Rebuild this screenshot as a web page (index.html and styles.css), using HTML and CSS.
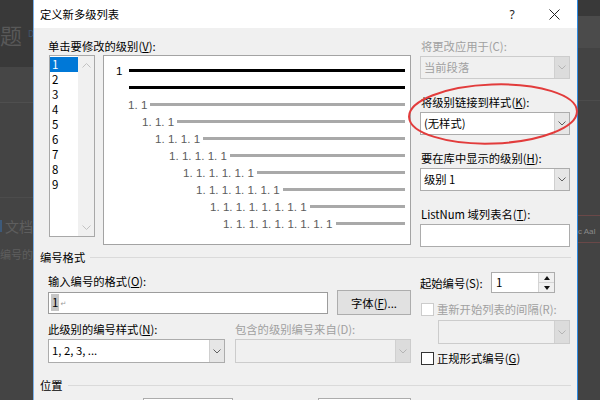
FILE: index.html
```html
<!DOCTYPE html>
<html>
<head>
<meta charset="utf-8">
<link rel="stylesheet" href="styles.css">
</head>
<body>
<div class="screen">
  <div class="bg-left">
    <div class="bgl-top"><span class="big">题</span><span class="tiny">D</span></div>
    <div class="bgl-band"></div>
    <div class="bgl-mid"></div>
    <div class="bgl-low">
      <div class="bgl-t1"><span class="bgl-icon"></span>文档</div>
      <div class="bgl-t2">编号的</div>
    </div>
  </div>

  <div class="dialog">
    <div class="titlebar">
      <span class="title">定义新多级列表</span>
      <span class="tb-spacer"></span>
      <span class="tb-btn help">?</span>
      <span class="tb-btn"><svg width="11" height="11" viewBox="0 0 11 11"><path d="M0.5 0.5 L10.5 10.5 M10.5 0.5 L0.5 10.5" stroke="#222" stroke-width="1" fill="none"/></svg></span>
    </div>

    <div class="body">
      <div class="top">
        <div class="col-left">
          <div class="label">单击要修改的级别(<u>V</u>):</div>
          <div class="lrow">
            <div class="listbox">
              <div class="items">
                <div class="item sel">1</div>
                <div class="item">2</div>
                <div class="item">3</div>
                <div class="item">4</div>
                <div class="item">5</div>
                <div class="item">6</div>
                <div class="item">7</div>
                <div class="item">8</div>
                <div class="item">9</div>
              </div>
              <div class="vscroll">
                <svg width="9" height="5" viewBox="0 0 9 5"><path d="M0.5 4.5 L4.5 0.5 L8.5 4.5" fill="none" stroke="#c2c2c2"/></svg>
                <svg width="9" height="5" viewBox="0 0 9 5"><path d="M0.5 0.5 L4.5 4.5 L8.5 0.5" fill="none" stroke="#c2c2c2"/></svg>
              </div>
            </div>
            <div class="preview">
              <div class="pr r1"><span class="pn n1">1</span><i class="pl blk"></i></div>
              <div class="pr r2"><i class="pl blk"></i></div>
              <div class="pr l2"><span class="pn">1. 1</span><i class="pl"></i></div>
              <div class="pr l3"><span class="pn">1. 1. 1</span><i class="pl"></i></div>
              <div class="pr l4"><span class="pn">1. 1. 1. 1</span><i class="pl"></i></div>
              <div class="pr l5"><span class="pn">1. 1. 1. 1. 1</span><i class="pl"></i></div>
              <div class="pr l6"><span class="pn">1. 1. 1. 1. 1. 1</span><i class="pl"></i></div>
              <div class="pr l7"><span class="pn">1. 1. 1. 1. 1. 1. 1</span><i class="pl"></i></div>
              <div class="pr l8"><span class="pn">1. 1. 1. 1. 1. 1. 1. 1</span><i class="pl"></i></div>
              <div class="pr l9"><span class="pn">1. 1. 1. 1. 1. 1. 1. 1. 1</span><i class="pl"></i></div>
            </div>
          </div>
        </div>

        <div class="col-right">
          <div class="group">
            <div class="label dis-text">将更改应用于(C):</div>
            <div class="combo dis">
              <span class="combo-text">当前段落</span>
              <span class="combo-btn"><svg width="8" height="5" viewBox="0 0 8 5"><path d="M0.5 0.5 L4 4 L7.5 0.5" fill="none" stroke="#b4b4b4"/></svg></span>
            </div>
          </div>
          <div class="group">
            <div class="label">将级别链接到样式(<u>K</u>):</div>
            <div class="combo">
              <span class="combo-text">(无样式)</span>
              <span class="combo-btn"><svg width="8" height="5" viewBox="0 0 8 5"><path d="M0.5 0.5 L4 4 L7.5 0.5" fill="none" stroke="#606060"/></svg></span>
            </div>
          </div>
          <div class="group">
            <div class="label">要在库中显示的级别(<u>H</u>):</div>
            <div class="combo">
              <span class="combo-text">级别 1</span>
              <span class="combo-btn"><svg width="8" height="5" viewBox="0 0 8 5"><path d="M0.5 0.5 L4 4 L7.5 0.5" fill="none" stroke="#606060"/></svg></span>
            </div>
          </div>
          <div class="group">
            <div class="label">ListNum 域列表名(<u>T</u>):</div>
            <div class="textbox"></div>
          </div>
        </div>
      </div>

      <div class="section s1"><span>编号格式</span><i class="sep"></i></div>

      <div class="lower">
        <div class="col-left">
          <div class="label l-fmt">输入编号的格式(<u>O</u>):</div>
          <div class="fmt-row">
            <div class="fmt-box"><span class="hl">1</span><span class="ret">↵</span></div>
            <div class="button">字体(<u>F</u>)...</div>
          </div>
          <div class="label-row">
            <div class="label lr-a">此级别的编号样式(<u>N</u>):</div>
            <div class="label lr-b dis-text">包含的级别编号来自(D):</div>
          </div>
          <div class="combo-row">
            <div class="combo c-style">
              <span class="combo-text">1, 2, 3, ...</span>
              <span class="combo-btn"><svg width="8" height="5" viewBox="0 0 8 5"><path d="M0.5 0.5 L4 4 L7.5 0.5" fill="none" stroke="#606060"/></svg></span>
            </div>
            <div class="combo dis c-inc">
              <span class="combo-text"></span>
              <span class="combo-btn"><svg width="8" height="5" viewBox="0 0 8 5"><path d="M0.5 0.5 L4 4 L7.5 0.5" fill="none" stroke="#b4b4b4"/></svg></span>
            </div>
          </div>
        </div>

        <div class="col-right">
          <div class="spin-row">
            <span class="spin-label">起始编号(S):</span>
            <div class="spin">
              <span class="spin-val">1</span>
              <span class="spin-btns">
                <span class="sb up"><i class="tri-up"></i></span>
                <span class="sb"><i class="tri-down"></i></span>
              </span>
            </div>
          </div>
          <div class="check-row cr1">
            <span class="checkbox dis"></span>
            <span class="dis-text">重新开始列表的间隔(R):</span>
          </div>
          <div class="combo dis c-restart">
            <span class="combo-text"></span>
            <span class="combo-btn"><svg width="8" height="5" viewBox="0 0 8 5"><path d="M0.5 0.5 L4 4 L7.5 0.5" fill="none" stroke="#b4b4b4"/></svg></span>
          </div>
          <div class="check-row cr2">
            <span class="checkbox"></span>
            <span>正规形式编号(<u>G</u>)</span>
          </div>
        </div>
      </div>

      <div class="section s2"><span>位置</span><i class="sep"></i></div>

      <div class="bottom">
        <div class="pbox b1"></div>
        <div class="pbox b2"></div>
      </div>
    </div>

    <svg class="ellipse" width="176" height="66" viewBox="0 0 176 66">
      <ellipse cx="88" cy="33" rx="84" ry="29.5" fill="none" stroke="#e23c3c" stroke-width="2" transform="rotate(-2 88 33)"/>
    </svg>
  </div>

  <div class="bg-right">
    <div class="bgr-1"></div>
    <div class="bgr-2"></div>
    <div class="bgr-3">
      <div class="bgr-line a"></div>
      <div class="bgr-red"></div>
      <div class="bgr-text">c AaI</div>
      <div class="bgr-red b"></div>
    </div>
  </div>
</div>
</body>
</html>
```

FILE: styles.css
```css
* { box-sizing: border-box; }

html, body {
  margin: 0;
  padding: 0;
}

body {
  width: 600px;
  height: 400px;
  overflow: hidden;
  font-family: "Noto Sans CJK SC", "Noto Sans", sans-serif;
  font-size: 11.3px;
  color: #000;
  background: #444;
}

u { text-decoration: underline; text-underline-offset: 1px; }

.screen {
  display: flex;
  width: 600px;
  height: 400px;
}

/* ---------- background left ---------- */
.bg-left {
  width: 33px;
  flex: none;
  background: #444444;
  display: flex;
  flex-direction: column;
  overflow: hidden;
}
.bgl-top {
  height: 67px;
  background: #393939;
  display: flex;
  align-items: center;
  white-space: nowrap;
}
.bgl-top .big {
  font-size: 22px;
  color: #585858;
  line-height: 1;
}
.bgl-top .tiny {
  font-size: 9px;
  color: #3f5570;
  margin-left: 6px;
}
.bgl-band {
  height: 36px;
  background: #464646;
  border-bottom: 1px solid #4f4f4f;
}
.bgl-mid {
  height: 95px;
  border-bottom: 1px solid #4c4c4c;
}
.bgl-low {
  padding-top: 14px;
  white-space: nowrap;
  font-size: 14px;
  color: #5e5e5e;
  line-height: 28px;
}
.bgl-t1 { display: flex; align-items: center; }
.bgl-icon {
  width: 3px;
  height: 12px;
  background: #3d5a7a;
  margin-right: 3px;
}
.bgl-t2 { font-size: 11px; }

/* ---------- dialog ---------- */
.dialog {
  position: relative;
  width: 545px;
  flex: none;
  height: 400px;
  background: #f0f0f0;
  border-left: 1px solid #79b0ea;
  border-right: 1px solid #2f8ae0;
  display: flex;
  flex-direction: column;
}

.titlebar {
  height: 28px;
  flex: none;
  background: #ffffff;
  display: flex;
  align-items: center;
  padding-right: 2px;
}
.title {
  padding-left: 6px;
  font-size: 11.3px;
  color: #000;
}
.tb-spacer { flex: 1; }
.tb-btn {
  width: 42px;
  height: 28px;
  display: flex;
  align-items: center;
  justify-content: center;
}
.tb-btn.help {
  font-family: "Noto Sans", sans-serif;
  font-size: 12px;
  color: #222;
}

.body {
  padding: 9px 6px 0 6px;
  display: flex;
  flex-direction: column;
}

.label {
  line-height: 18px;
  height: 18px;
  white-space: nowrap;
}
.dis-text { color: #a0a0a0; }

/* top section */
.top {
  display: flex;
  gap: 9px;
  padding-left: 8px;
  height: 210px;
}
.col-left { width: 363px; flex: none; }
.col-right { width: 150px; flex: none; }

.top .col-right {
  display: flex;
  flex-direction: column;
  gap: 14px;
}
.top .col-right .label { padding-left: 1px; }
.group .combo, .group .textbox { margin-top: 1px; }

.lrow {
  display: flex;
  gap: 8px;
  align-items: flex-start;
}

.listbox {
  width: 46px;
  height: 182px;
  border: 1px solid #a8a8a8;
  background: #fff;
  display: flex;
  margin-left: 1px;
}
.items {
  width: 28px;
  padding-top: 1px;
}
.item {
  height: 15px;
  line-height: 15px;
  padding-left: 2px;
  font-size: 11.5px;
  color: #000;
}
.item.sel {
  background: #0078d7;
  color: #fff;
}
.vscroll {
  width: 16px;
  background: #f0f0f0;
  display: flex;
  flex-direction: column;
  justify-content: space-between;
  align-items: center;
  padding: 7px 0 6px;
}
.vscroll svg { display: block; }

.preview {
  width: 308px;
  height: 190px;
  border: 1px solid #a3a3a3;
  background: #fff;
  padding-top: 6px;
  padding-right: 5px;
}
.pr {
  height: 17px;
  display: flex;
  align-items: center;
}
.pn {
  font-family: "Liberation Sans", Arial, sans-serif;
  font-size: 11.6px;
  line-height: 17px;
  color: #5c5c5c;
  white-space: pre;
  margin-right: 3px;
}
.pn.n1 {
  width: 13px;
  margin-right: 0;
  color: #000;
}
.pl {
  flex: 1;
  height: 3px;
  background: #a9a9a9;
}
.pl.blk { background: #000; }

.r1 { padding-left: 12px; }
.r2 { padding-left: 25px; }
.l2 { padding-left: 24px; }
.l3 { padding-left: 38px; }
.l4 { padding-left: 51px; }
.l5 { padding-left: 65px; }
.l6 { padding-left: 79px; }
.l7 { padding-left: 92px; }
.l8 { padding-left: 106px; }
.l9 { padding-left: 119px; }

/* combos */
.combo {
  height: 23px;
  border: 1px solid #acacac;
  background: #fff;
  display: flex;
}
.combo-text {
  flex: 1;
  padding-left: 3px;
  line-height: 21px;
  white-space: nowrap;
  overflow: hidden;
}
.combo-btn {
  width: 15px;
  background: #e6e6e6;
  border-left: 1px solid #cfcfcf;
  display: flex;
  align-items: center;
  justify-content: center;
}
.combo.dis {
  border-color: #cccccc;
  background: #f0f0f0;
  color: #a0a0a0;
}
.combo.dis .combo-btn {
  background: #dcdcdc;
  border-left-color: #d0d0d0;
}
.combo-btn svg { display: block; }

.textbox {
  height: 23px;
  border: 1px solid #acacac;
  background: #fff;
}

/* sections */
.section {
  display: flex;
  align-items: center;
  line-height: 16px;
  height: 16px;
  white-space: nowrap;
}
.section .sep {
  flex: 1;
  height: 1px;
  background: #dadada;
  margin-left: 5px;
}
.s1 { margin-top: 2px; }
.s2 { margin-top: 10px; }

/* lower section */
.lower {
  display: flex;
  gap: 9px;
  padding-left: 8px;
  height: 102px;
}
.l-fmt {
  margin-top: 8px;
  height: 17px;
  line-height: 17px;
}
.fmt-row {
  display: flex;
  align-items: center;
  gap: 9px;
  height: 25px;
}
.fmt-box {
  width: 280px;
  height: 22px;
  border: 1px solid #9c9c9c;
  background: #fff;
  display: flex;
  align-items: center;
  padding-left: 2px;
}
.fmt-box .hl {
  background: #c6c6c6;
  font-size: 11.5px;
  line-height: 17px;
  padding: 0 1px;
}
.fmt-box .ret {
  font-family: "DejaVu Sans", sans-serif;
  font-size: 7px;
  color: #999;
  margin-left: 1px;
  margin-top: 3px;
}
.button {
  width: 74px;
  height: 25px;
  background: #e1e1e1;
  border: 1px solid #adadad;
  display: flex;
  align-items: center;
  justify-content: center;
  white-space: nowrap;
}
.label-row {
  display: flex;
  margin-top: 5px;
}
.lr-a { width: 187px; }
.combo-row {
  display: flex;
  gap: 10px;
  margin-top: 1px;
}
.c-style { width: 177px; height: 24px; }
.c-inc { width: 176px; height: 24px; }

.lower .col-right {
  display: flex;
  flex-direction: column;
}
.spin-row {
  margin-top: 7px;
  height: 21px;
  display: flex;
  align-items: center;
}
.spin-label {
  width: 71px;
  white-space: nowrap;
}
.spin {
  width: 64px;
  height: 21px;
  border: 1px solid #acacac;
  background: #fff;
  display: flex;
}
.spin-val {
  flex: 1;
  padding-left: 4px;
  line-height: 19px;
  font-size: 11.5px;
}
.spin-btns {
  width: 16px;
  display: flex;
  flex-direction: column;
  border-left: 1px solid #d4d4d4;
}
.sb {
  flex: 1;
  background: #f0f0f0;
  display: flex;
  align-items: center;
  justify-content: center;
}
.sb.up { border-bottom: 1px solid #d4d4d4; }
.tri-up {
  width: 0; height: 0;
  border-left: 3.5px solid transparent;
  border-right: 3.5px solid transparent;
  border-bottom: 4px solid #111;
}
.tri-down {
  width: 0; height: 0;
  border-left: 3.5px solid transparent;
  border-right: 3.5px solid transparent;
  border-top: 4px solid #111;
}

.check-row {
  height: 18px;
  display: flex;
  align-items: center;
  gap: 3px;
  padding-left: 1px;
  white-space: nowrap;
}
.cr1 { margin-top: 7px; }
.cr2 { margin-top: 5px; }
.checkbox {
  width: 13px;
  height: 13px;
  border: 1px solid #333;
  background: #fff;
  flex: none;
}
.checkbox.dis { border-color: #cccccc; }

.c-restart {
  width: 132px;
  height: 24px;
  margin-top: 2px;
  margin-left: 18px;
}

/* bottom partial */
.bottom {
  display: flex;
  margin-top: 5px;
}
.pbox {
  height: 20px;
  border: 1px solid #acacac;
  background: #fff;
}
.b1 { margin-left: 103px; width: 90px; }
.b2 { margin-left: 85px; width: 93px; }

/* annotation overlay */
.ellipse {
  position: absolute;
  left: 371px;
  top: 81px;
  overflow: visible;
  z-index: 5;
}

/* ---------- background right ---------- */
.bg-right {
  flex: 1;
  background: #434343;
  display: flex;
  flex-direction: column;
  overflow: hidden;
}
.bgr-1 { height: 16px; background: #393939; }
.bgr-2 { height: 32px; background: #4b4b4b; }
.bgr-3 { flex: 1; position: relative; }
.bgr-line.a {
  margin-top: 52px;
  height: 1px;
  background: #4c4c4c;
}
.bgr-red {
  margin-top: 114px;
  height: 1px;
  background: #6a4848;
}
.bgr-text {
  margin-top: 11px;
  font-family: "Liberation Sans", sans-serif;
  font-size: 8px;
  color: #8a8a8a;
  white-space: nowrap;
  line-height: 10px;
}
.bgr-red.b { margin-top: 5px; }
```
